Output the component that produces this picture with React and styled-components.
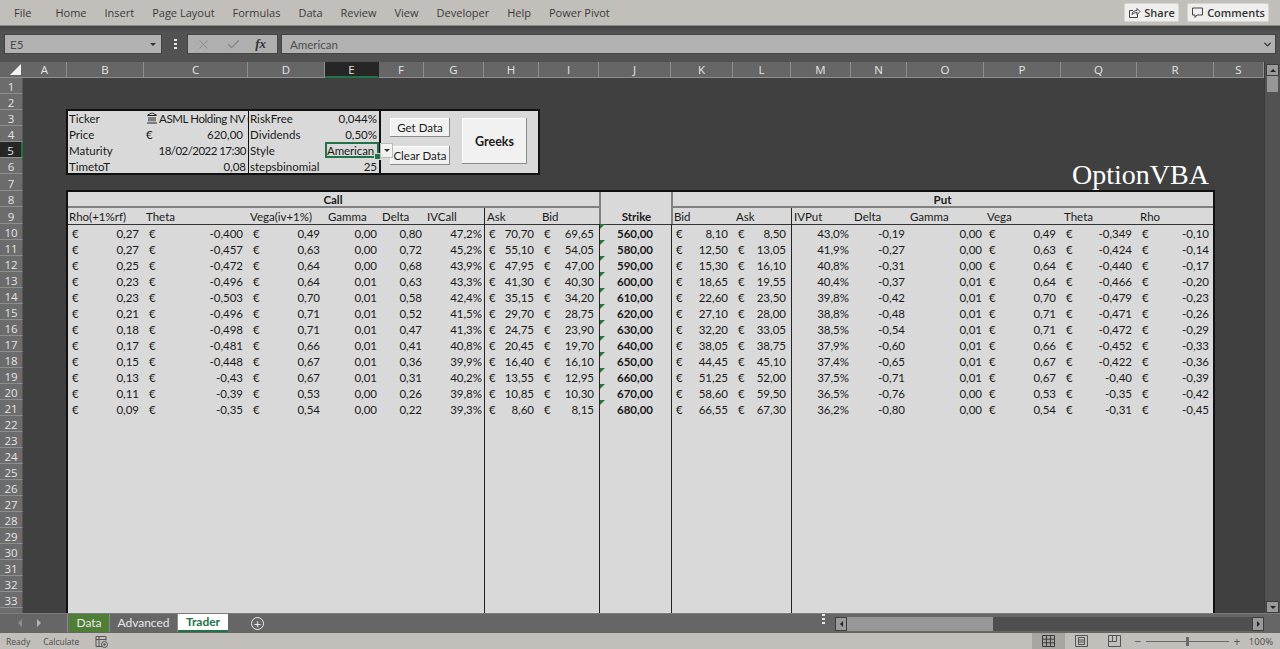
import React from "react";
import styled, { createGlobalStyle } from "styled-components";
import { Landmark, X, Check, ChevronDown } from "lucide-react";

const GlobalStyle = createGlobalStyle`
  html, body { margin: 0; padding: 0; background: #404040; overflow: hidden; }
  * { box-sizing: border-box; }
`;

const COL_WIDTHS = [44, 77, 104, 77, 54, 45, 60, 55, 60, 72, 62, 58, 60, 56, 77, 77, 76, 77, 50];
const COL_NAMES = "ABCDEFGHIJKLMNOPQRS".split("");
const ROW_HEIGHTS = Array.from({ length: 34 }, (_, i) => (i === 6 || i === 8 ? 17 : 16));
const RIBBON = ["Home", "Insert", "Page Layout", "Formulas", "Data", "Review", "View", "Developer", "Help", "Power Pivot"];

// rows of the option chain, same order as the sheet columns B to R
const CHAIN = [
  ["0,27", "-0,400", "0,49", "0,00", "0,80", "47,2%", "70,70", "69,65", "560,00", "8,10", "8,50", "43,0%", "-0,19", "0,00", "0,49", "-0,349", "-0,10"],
  ["0,27", "-0,457", "0,63", "0,00", "0,72", "45,2%", "55,10", "54,05", "580,00", "12,50", "13,05", "41,9%", "-0,27", "0,00", "0,63", "-0,424", "-0,14"],
  ["0,25", "-0,472", "0,64", "0,00", "0,68", "43,9%", "47,95", "47,00", "590,00", "15,30", "16,10", "40,8%", "-0,31", "0,00", "0,64", "-0,440", "-0,17"],
  ["0,23", "-0,496", "0,64", "0,01", "0,63", "43,3%", "41,30", "40,30", "600,00", "18,65", "19,55", "40,4%", "-0,37", "0,01", "0,64", "-0,466", "-0,20"],
  ["0,23", "-0,503", "0,70", "0,01", "0,58", "42,4%", "35,15", "34,20", "610,00", "22,60", "23,50", "39,8%", "-0,42", "0,01", "0,70", "-0,479", "-0,23"],
  ["0,21", "-0,496", "0,71", "0,01", "0,52", "41,5%", "29,70", "28,75", "620,00", "27,10", "28,00", "38,8%", "-0,48", "0,01", "0,71", "-0,471", "-0,26"],
  ["0,18", "-0,498", "0,71", "0,01", "0,47", "41,3%", "24,75", "23,90", "630,00", "32,20", "33,05", "38,5%", "-0,54", "0,01", "0,71", "-0,472", "-0,29"],
  ["0,17", "-0,481", "0,66", "0,01", "0,41", "40,8%", "20,45", "19,70", "640,00", "38,05", "38,75", "37,9%", "-0,60", "0,01", "0,66", "-0,452", "-0,33"],
  ["0,15", "-0,448", "0,67", "0,01", "0,36", "39,9%", "16,40", "16,10", "650,00", "44,45", "45,10", "37,4%", "-0,65", "0,01", "0,67", "-0,422", "-0,36"],
  ["0,13", "-0,43", "0,67", "0,01", "0,31", "40,2%", "13,55", "12,95", "660,00", "51,25", "52,00", "37,5%", "-0,71", "0,01", "0,67", "-0,40", "-0,39"],
  ["0,11", "-0,39", "0,53", "0,00", "0,26", "39,8%", "10,85", "10,30", "670,00", "58,60", "59,50", "36,5%", "-0,76", "0,00", "0,53", "-0,35", "-0,42"],
  ["0,09", "-0,35", "0,54", "0,00", "0,22", "39,3%", "8,60", "8,15", "680,00", "66,55", "67,30", "36,2%", "-0,80", "0,00", "0,54", "-0,31", "-0,45"],
];
const LABELS = ["Rho(+1%rf)", "Theta", "Vega(iv+1%)", "Gamma", "Delta", "IVCall", "Ask", "Bid", "Strike", "Bid", "Ask", "IVPut", "Delta", "Gamma", "Vega", "Theta", "Rho"];
const MONEY_COLS = [0, 1, 2, 6, 7, 9, 10, 14, 15, 16];
const RULE_COLS = [6, 8, 9, 11];
const STRIKE_COL = 8;

const Page = styled.div`
  width: 1280px;
  height: 649px;
  display: flex;
  flex-direction: column;
  overflow: hidden;
  background: #404040;
  font-family: "Lato", "Liberation Sans", sans-serif;
`;

const Ribbon = styled.div`
  height: 26px;
  flex: none;
  display: flex;
  align-items: center;
  padding: 0 11px 0 14px;
  background: #c2bfba;
  color: #3a3a3a;
  font-family: "Open Sans", "Liberation Sans", sans-serif;
  font-size: 11px;
  border-bottom: 1px solid #8c8a86;
`;

const FileTab = styled.span`
  margin-right: 24px;
`;

const RibbonTab = styled.span`
  margin-right: 18px;
`;

const RibbonSpacer = styled.div`
  flex: 1;
`;

const RibbonButton = styled.button`
  height: 19px;
  margin-left: 8px;
  width: ${(p) => p.$width}px;
  display: flex;
  align-items: center;
  justify-content: center;
  gap: 3px;
  padding: 0;
  background: #f0efed;
  border: 1px solid #d8d6d3;
  border-radius: 2px;
  color: #333;
  font-family: inherit;
  font-size: 11px;
  font-weight: 600;
`;

const FormulaBar = styled.div`
  height: 36px;
  flex: none;
  display: flex;
  align-items: center;
  padding: 0 4px 0 4px;
  background: linear-gradient(#444 0, #525252 6px);
`;

const NameBox = styled.div`
  width: 158px;
  height: 20px;
  display: flex;
  align-items: center;
  justify-content: space-between;
  padding: 0 5px 0 5px;
  background: #b2b2b2;
  border: 1px solid #444;
  color: #4c4c4c;
  font-size: 11.5px;
`;

const MiniArrow = styled.span`
  width: 0;
  height: 0;
  border-left: 3px solid transparent;
  border-right: 3px solid transparent;
  border-top: 3px solid #333;
`;

const DotStack = styled.div`
  width: 3px;
  height: 10px;
  margin: 0 ${(p) => p.$right}px 0 ${(p) => p.$left}px;
  flex: none;
  background: repeating-linear-gradient(#e8e8e8 0 2px, transparent 2px 4px);
`;

const FormulaButtons = styled.div`
  width: 91px;
  height: 20px;
  display: flex;
  align-items: center;
  justify-content: space-between;
  padding: 0 11px 0 8px;
  background: #afafaf;
  border: 1px solid #444;
  color: #858585;
`;

const FxLabel = styled.i`
  font-family: "Liberation Serif", serif;
  font-size: 13px;
  font-weight: bold;
  color: #333;
`;

const FormulaInput = styled.div`
  flex: 1;
  height: 20px;
  margin-left: 3px;
  display: flex;
  align-items: center;
  justify-content: space-between;
  padding: 0 2px 0 8px;
  background: #b2b2b2;
  border: 1px solid #444;
  color: #4c4c4c;
  font-size: 11.5px;
`;

const SheetArea = styled.div`
  display: flex;
  height: 551px;
  flex: none;
`;

const Sheet = styled.div`
  width: 1264px;
  height: 551px;
  flex: none;
  display: grid;
  grid-template-columns: 23px ${COL_WIDTHS.map((w) => w + "px").join(" ")};
  grid-template-rows: 16px ${ROW_HEIGHTS.map((h) => h + "px").join(" ")};
  overflow: hidden;
  background: #404040;
  font-size: 11.5px;
  color: #1a1a1a;
`;

const Corner = styled.div`
  position: relative;
  background: #666;
  border-bottom: 1px solid #8e8e8e;
  &::after {
    content: "";
    position: absolute;
    right: 2px;
    bottom: 2px;
    border-left: 11px solid transparent;
    border-bottom: 11px solid #f2f2f2;
  }
`;

const ColHead = styled.div`
  display: flex;
  align-items: center;
  justify-content: center;
  background: ${(p) => (p.$active ? "#262626" : "#666")};
  color: #e4e4e4;
  font-family: "Open Sans", "Liberation Sans", sans-serif;
  font-size: 11.5px;
  border-right: 1px solid ${(p) => (p.$active ? "#262626" : "#8e8e8e")};
  border-bottom: ${(p) => (p.$active ? "2px solid #217346" : "1px solid #8e8e8e")};
`;

const RowHead = styled.div`
  grid-column: 1;
  display: flex;
  align-items: center;
  justify-content: center;
  padding-top: 2px;
  background: ${(p) => (p.$active ? "#262626" : "#6c6c6c")};
  color: #e4e4e4;
  font-family: "Open Sans", "Liberation Sans", sans-serif;
  font-size: 11.5px;
  border-bottom: 1px solid #8e8e8e;
  border-right: ${(p) => (p.$active ? "2px solid #217346" : "1px solid #555")};
`;

const InfoPanel = styled.section`
  grid-column: 3 / 10;
  grid-row: 4 / 8;
  display: grid;
  grid-template-columns: subgrid;
  grid-template-rows: subgrid;
  background: #d9d9d9;
  outline: 2px solid #111;
  outline-offset: -1px;
`;

const InfoCell = styled.div`
  display: flex;
  align-items: center;
  justify-content: ${(p) => p.$justify || "flex-start"};
  padding: 0 ${(p) => p.$padRight ?? 2}px 0 2px;
  white-space: nowrap;
  overflow: hidden;
  letter-spacing: ${(p) => p.$tight || 0}px;
  box-shadow: ${(p) => (p.$rule ? "inset 1px 0 0 #111" : "none")};
`;

const TickerIcon = styled.span`
  display: inline-flex;
  color: #222;
  margin-right: 1px;
`;

const SelectedCell = styled.div`
  position: relative;
  display: flex;
  align-items: center;
  background: #d9d9d9;
  border: 2px solid #217346;
  letter-spacing: -0.1px;
  &::after {
    content: "";
    position: absolute;
    right: -4px;
    bottom: -4px;
    width: 5px;
    height: 5px;
    background: #217346;
    border: 1px solid #d9d9d9;
  }
`;

const DropButton = styled.span`
  position: absolute;
  left: 100%;
  top: -1px;
  margin-left: 3px;
  width: 13px;
  height: 15px;
  display: flex;
  align-items: center;
  justify-content: center;
  background: #f2f2f2;
  border: 1px solid #bbb;
  z-index: 2;
`;

const ControlBox = styled.div`
  grid-column: 5 / 8;
  grid-row: 1 / -1;
  display: flex;
  align-items: center;
  gap: 12px;
  padding: 0 0 2px 11px;
  box-shadow: inset 2px 0 0 #111;
`;

const ButtonStack = styled.div`
  width: 60px;
  height: 47px;
  display: flex;
  flex-direction: column;
  justify-content: space-between;
`;

const SheetButton = styled.button`
  width: ${(p) => p.$width || 60}px;
  height: ${(p) => p.$height || 19}px;
  padding: 0;
  background: #f1f1f1;
  border: none;
  box-shadow: inset -1px -1px 0 #8a8a8a, inset 1px 1px 0 #fff;
  color: #1c1c1c;
  font-family: "Lato", "Liberation Sans", sans-serif;
  font-size: ${(p) => (p.$bold ? "12.5px" : "11.5px")};
  font-weight: ${(p) => (p.$bold ? 700 : 400)};
`;

const Brand = styled.div`
  grid-column: 17 / 20;
  grid-row: 7 / 9;
  display: flex;
  align-items: center;
  justify-content: flex-end;
  padding-right: 5px;
  color: #fff;
  font-family: "Liberation Serif", serif;
  font-size: 28px;
`;

const ChainTable = styled.section`
  grid-column: 3 / 20;
  grid-row: 9 / 36;
  display: grid;
  grid-template-columns: subgrid;
  grid-template-rows: subgrid;
  background: #d9d9d9;
  outline: 2px solid #111;
  outline-offset: -1px;
`;

const TableRow = styled.div`
  grid-column: 1 / -1;
  grid-row: span ${(p) => p.$span || 1};
  display: grid;
  grid-template-columns: subgrid;
  box-shadow: ${(p) => (p.$topLine ? "inset 0 1px 0 #333" : "none")};
`;

const TitleCell = styled.div`
  grid-column: span ${(p) => p.$span};
  display: flex;
  align-items: center;
  justify-content: center;
  padding-top: 2px;
  font-weight: 700;
  border-bottom: ${(p) => (p.$plain ? "none" : "1px solid #808080")};
  box-shadow: ${(p) => (p.$rule ? "inset 2px 0 0 #808080" : "none")};
`;

const HeadCell = styled.div`
  display: flex;
  align-items: center;
  justify-content: ${(p) => (p.$center ? "center" : "flex-start")};
  padding: 1px 0 0 ${(p) => p.$pad}px;
  white-space: nowrap;
  font-weight: ${(p) => (p.$bold ? 700 : 400)};
  box-shadow: ${(p) => (p.$center ? "" : "inset 0 1px 0 #808080,")}
    ${(p) => (p.$rule === "grey" ? "inset 2px 0 0 #808080" : p.$rule ? "inset 1px 0 0 #222" : "inset 0 0 0 transparent")};
`;

const DataCell = styled.div`
  position: relative;
  display: flex;
  align-items: center;
  justify-content: ${(p) => (p.$money ? "space-between" : p.$center ? "center" : "flex-end")};
  padding: 2px ${(p) => (p.$money ? 5 : p.$center ? 0 : 2)}px 0 ${(p) => (p.$money ? 5 : 0)}px;
  white-space: nowrap;
  font-weight: ${(p) => (p.$bold ? 700 : 400)};
  box-shadow: ${(p) => (p.$rule ? "inset 1px 0 0 #222" : "none")};
  &::before {
    content: "";
    display: ${(p) => (p.$flag ? "block" : "none")};
    position: absolute;
    left: 1px;
    top: 0;
    border-top: 5px solid #1f7a3c;
    border-right: 5px solid transparent;
  }
`;

const FillCell = styled.div`
  box-shadow: ${(p) => (p.$rule ? "inset 1px 0 0 #222" : "none")};
`;

const VScroll = styled.div`
  width: 16px;
  flex: none;
  display: flex;
  flex-direction: column;
  align-items: center;
  padding-top: 2px;
  background: #525252;
  border-left: 1px solid #3a3a3a;
`;

const ScrollButton = styled.div`
  width: ${(p) => p.$w}px;
  height: ${(p) => p.$h}px;
  flex: none;
  display: flex;
  align-items: center;
  justify-content: center;
  background: #9a9a9a;
  border: 1px solid #3d3d3d;
`;

const VThumb = styled.div`
  width: 11px;
  height: 16px;
  flex: none;
  background: #979797;
`;

const Triangle = styled.span`
  width: 0;
  height: 0;
  border-style: solid;
  border-color: transparent;
  border-width: 3px;
  ${(p) => p.$dir === "up" && "border-bottom-color: #222; border-top-width: 0;"}
  ${(p) => p.$dir === "down" && "border-top-color: #222; border-bottom-width: 0;"}
  ${(p) => p.$dir === "left" && "border-right-color: #222; border-left-width: 0;"}
  ${(p) => p.$dir === "right" && "border-left-color: #222; border-right-width: 0;"}
`;

const VSpacer = styled.div`
  flex: 1;
`;

const TabBar = styled.div`
  height: 20px;
  flex: none;
  display: flex;
  align-items: flex-start;
  background: #666;
  border-top: 1px solid #7c7c7c;
  color: #e8e8e8;
  font-size: 12px;
`;

const TabNav = styled.div`
  width: 68px;
  height: 18px;
  flex: none;
  display: flex;
  align-items: center;
  gap: 15px;
  padding-left: 18px;
  border-right: 1px solid #8a8a8a;
  color: #8d8d8d;
`;

const NavArrow = styled.span`
  width: 0;
  height: 0;
  border-style: solid;
  border-color: transparent;
  border-width: 4px;
  ${(p) => (p.$back ? "border-right-color: #8d8d8d; border-left-width: 0;" : "border-left-color: #b5b5b5; border-right-width: 0;")}
`;

const SheetTab = styled.div`
  width: ${(p) => p.$width}px;
  height: 18px;
  margin-left: ${(p) => p.$gap || 0}px;
  padding-bottom: 2px;
  display: flex;
  align-items: center;
  justify-content: center;
  background: ${(p) => (p.$active ? "#fff" : p.$green ? "#4f7f36" : "transparent")};
  color: ${(p) => (p.$active ? "#217346" : "#e8e8e8")};
  font-weight: ${(p) => (p.$active ? 700 : 400)};
  border-bottom: ${(p) => (p.$active ? "2px solid #217346" : "none")};
  border-right: ${(p) => (p.$edge ? "1px solid #8a8a8a" : "none")};
`;

const AddTab = styled.div`
  width: 13px;
  height: 13px;
  margin: 3px 0 0 23px;
  flex: none;
  display: flex;
  align-items: center;
  justify-content: center;
  border: 1px solid #eee;
  border-radius: 50%;
  color: #eee;
  font-size: 12px;
  line-height: 1;
`;

const TabSpacer = styled.div`
  flex: 1;
`;

const HScroll = styled.div`
  width: 429px;
  height: 14px;
  margin: 3px 16px 0 0;
  flex: none;
  display: flex;
  background: #4f4f4f;
`;

const HThumb = styled.div`
  width: 146px;
  background: #979797;
`;

const StatusBar = styled.div`
  height: 16px;
  flex: none;
  display: flex;
  align-items: center;
  padding-left: 6px;
  background: #c2bfba;
  color: #4a4a4a;
  font-family: "Open Sans", "Liberation Sans", sans-serif;
  font-size: 8.5px;
`;

const StatusText = styled.span`
  margin-right: ${(p) => p.$gap}px;
`;

const ViewButton = styled.div`
  width: 33px;
  height: 16px;
  flex: none;
  display: flex;
  align-items: center;
  justify-content: center;
  background: ${(p) => (p.$active ? "#a8a5a1" : "transparent")};
`;

const ZoomSlider = styled.div`
  position: relative;
  width: 83px;
  height: 1px;
  margin: 0 4px;
  background: #6a6a6a;
  &::after {
    content: "";
    position: absolute;
    left: 40px;
    top: -4px;
    width: 3px;
    height: 9px;
    background: #6a6a6a;
  }
`;

const ZoomMark = styled.span`
  font-size: 12px;
  color: #555;
  width: 8px;
  margin-left: ${(p) => p.$gap || 0}px;
  text-align: center;
`;

const ZoomValue = styled.span`
  margin: 0 7px 0 8px;
  font-size: 9.5px;
`;

const ShareIcon = () => (
  <svg width="13" height="13" viewBox="0 0 13 13" fill="none" stroke="#444" strokeWidth="1">
    <path d="M5 4.5H1.5v7h8V8" />
    <path d="M4 8.5c.3-2.5 2-4 5-4V2.5l3 3-3 3v-2c-2 0-3.5.6-5 2z" />
  </svg>
);

const CommentIcon = () => (
  <svg width="13" height="13" viewBox="0 0 13 13" fill="none" stroke="#444" strokeWidth="1">
    <path d="M1.5 2h10v7H6l-2 2.5V9H1.5z" />
  </svg>
);

const MacroIcon = () => (
  <svg width="13" height="13" viewBox="0 0 13 13" fill="none" stroke="#555" strokeWidth="1">
    <path d="M7 11.5H1V1.5h10v4" />
    <path d="M1 4.5h10M4 1.5v10" />
    <circle cx="9.5" cy="9.5" r="3" fill="#c2bfba" />
    <circle cx="9.5" cy="9.5" r="1.2" fill="#555" stroke="none" />
  </svg>
);

const GridIcon = () => (
  <svg width="13" height="12" viewBox="0 0 13 12" fill="none" stroke="#3c3c3c" strokeWidth="1">
    <path d="M.5.5h12v11H.5zM.5 4.2h12M.5 7.8h12M4.5.5v11M8.5.5v11" />
  </svg>
);

const PageIcon = () => (
  <svg width="13" height="12" viewBox="0 0 13 12" fill="none" stroke="#555" strokeWidth="1">
    <path d="M.5.5h12v11H.5zM3.5 2.5h6v7h-6zM3.5 5h6M3.5 7h6" />
  </svg>
);

const BreakIcon = () => (
  <svg width="13" height="12" viewBox="0 0 13 12" fill="none" stroke="#555" strokeWidth="1">
    <path d="M.5.5h12v11H.5zM.5 6.5h8V.5M4.5.5v6" />
  </svg>
);

function InfoRow({ label, value, label2, value2, selected }) {
  return (
    <>
      <InfoCell>{label}</InfoCell>
      {value}
      <InfoCell $rule>{label2}</InfoCell>
      {selected ? (
        <SelectedCell>
          {value2}
          <DropButton>
            <MiniArrow />
          </DropButton>
        </SelectedCell>
      ) : (
        <InfoCell $justify="flex-end">{value2}</InfoCell>
      )}
    </>
  );
}

export default function App() {
  return (
    <Page>
      <GlobalStyle />
      <Ribbon>
        <FileTab>File</FileTab>
        {RIBBON.map((t) => (
          <RibbonTab key={t}>{t}</RibbonTab>
        ))}
        <RibbonSpacer />
        <RibbonButton $width={55}>
          <ShareIcon />
          Share
        </RibbonButton>
        <RibbonButton $width={82}>
          <CommentIcon />
          Comments
        </RibbonButton>
      </Ribbon>

      <FormulaBar>
        <NameBox>
          E5
          <MiniArrow />
        </NameBox>
        <DotStack $left={12} $right={10} />
        <FormulaButtons>
          <X size={15} strokeWidth={1.5} />
          <Check size={15} strokeWidth={2} />
          <FxLabel>fx</FxLabel>
        </FormulaButtons>
        <FormulaInput>
          American
          <ChevronDown size={11} strokeWidth={3} color="#333" />
        </FormulaInput>
      </FormulaBar>

      <SheetArea>
        <Sheet>
          <Corner />
          {COL_NAMES.map((c) => (
            <ColHead key={c} $active={c === "E"}>
              {c}
            </ColHead>
          ))}
          {ROW_HEIGHTS.map((_, i) => (
            <RowHead key={i} $active={i === 4}>
              {i + 1}
            </RowHead>
          ))}

          <InfoPanel>
            <InfoRow
              label="Ticker"
              value={
                <InfoCell $tight={-0.4} $padRight={0}>
                  <TickerIcon>
                    <Landmark size={12} strokeWidth={2} />
                  </TickerIcon>
                  ASML Holding NV (
                </InfoCell>
              }
              label2="RiskFree"
              value2="0,044%"
            />
            <InfoRow
              label="Price"
              value={
                <InfoCell $justify="space-between" $padRight={5}>
                  <span>€</span>
                  <span>620,00</span>
                </InfoCell>
              }
              label2="Dividends"
              value2="0,50%"
            />
            <InfoRow
              label="Maturity"
              value={
                <InfoCell $justify="flex-end" $tight={-0.55}>
                  18/02/2022 17:30
                </InfoCell>
              }
              label2="Style"
              value2="American"
              selected
            />
            <InfoRow
              label="TimetoT"
              value={<InfoCell $justify="flex-end">0,08</InfoCell>}
              label2="stepsbinomial"
              value2="25"
            />
            <ControlBox>
              <ButtonStack>
                <SheetButton>Get Data</SheetButton>
                <SheetButton>Clear Data</SheetButton>
              </ButtonStack>
              <SheetButton $width={65} $height={46} $bold>
                Greeks
              </SheetButton>
            </ControlBox>
          </InfoPanel>

          <Brand>OptionVBA</Brand>

          <ChainTable>
            <TableRow>
              <TitleCell $span={8}>Call</TitleCell>
              <TitleCell $span={1} $plain $rule />
              <TitleCell $span={8} $rule>
                Put
              </TitleCell>
            </TableRow>
            <TableRow>
              {LABELS.map((label, i) => (
                <HeadCell
                  key={i}
                  $pad={i < 3 ? 2 : 3}
                  $center={i === STRIKE_COL}
                  $bold={i === STRIKE_COL}
                  $rule={i === 8 || i === 9 ? "grey" : RULE_COLS.includes(i)}
                >
                  {label}
                </HeadCell>
              ))}
            </TableRow>
            {CHAIN.map((row, r) => (
              <TableRow key={r} $topLine={r === 0}>
                {row.map((value, i) => {
                  const money = MONEY_COLS.includes(i);
                  const strike = i === STRIKE_COL;
                  return (
                    <DataCell
                      key={i}
                      $money={money}
                      $center={strike}
                      $bold={strike}
                      $flag={strike}
                      $rule={RULE_COLS.includes(i)}
                    >
                      {money && <span>€</span>}
                      <span>{value}</span>
                    </DataCell>
                  );
                })}
              </TableRow>
            ))}
            <TableRow $span={13}>
              {LABELS.map((_, i) => (
                <FillCell key={i} $rule={RULE_COLS.includes(i)} />
              ))}
            </TableRow>
          </ChainTable>
        </Sheet>
        <VScroll>
          <ScrollButton $w={13} $h={12}>
            <Triangle $dir="up" />
          </ScrollButton>
          <VThumb />
          <VSpacer />
          <ScrollButton $w={13} $h={12}>
            <Triangle $dir="down" />
          </ScrollButton>
        </VScroll>
      </SheetArea>

      <TabBar>
        <TabNav>
          <NavArrow $back />
          <NavArrow />
        </TabNav>
        <SheetTab $width={41} $gap={1} $green $edge>
          Data
        </SheetTab>
        <SheetTab $width={68} $edge>
          Advanced
        </SheetTab>
        <SheetTab $width={50} $active>
          Trader
        </SheetTab>
        <AddTab>+</AddTab>
        <TabSpacer />
        <DotStack $left={10} $right={10} />
        <HScroll>
          <ScrollButton $w={12} $h={14}>
            <Triangle $dir="left" />
          </ScrollButton>
          <HThumb />
          <VSpacer />
          <ScrollButton $w={12} $h={14}>
            <Triangle $dir="right" />
          </ScrollButton>
        </HScroll>
      </TabBar>

      <StatusBar>
        <StatusText $gap={13}>Ready</StatusText>
        <StatusText $gap={16}>Calculate</StatusText>
        <MacroIcon />
        <RibbonSpacer />
        <ViewButton $active>
          <GridIcon />
        </ViewButton>
        <ViewButton>
          <PageIcon />
        </ViewButton>
        <ViewButton>
          <BreakIcon />
        </ViewButton>
        <ZoomMark $gap={3}>−</ZoomMark>
        <ZoomSlider />
        <ZoomMark>+</ZoomMark>
        <ZoomValue>100%</ZoomValue>
      </StatusBar>
    </Page>
  );
}
